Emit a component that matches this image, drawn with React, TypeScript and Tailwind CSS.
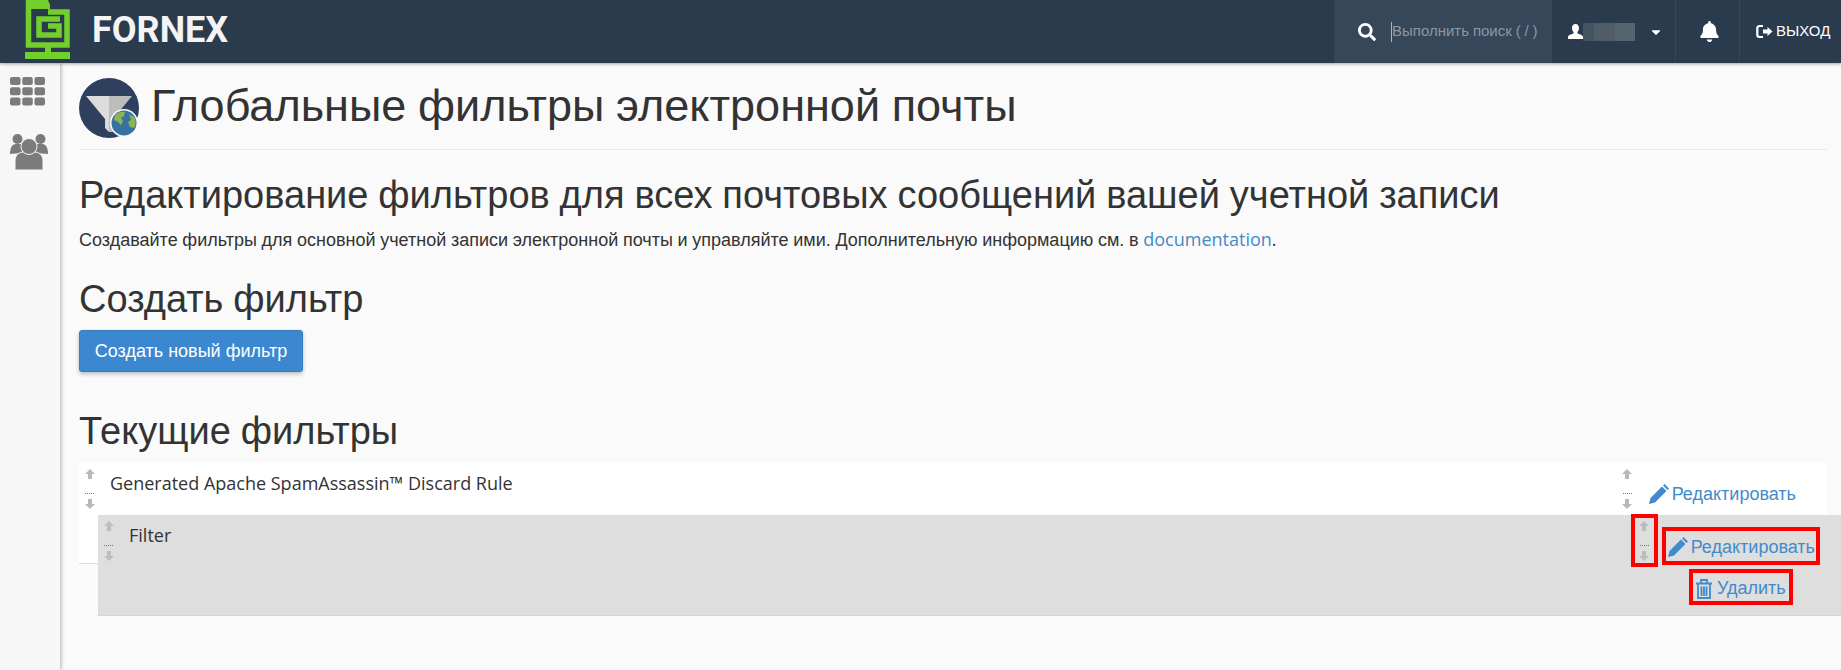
import { FaBell, FaSearch, FaCaretDown } from "react-icons/fa";

const sans = "font-['Liberation_Sans',Arial,sans-serif]";
const openSans = "font-['Open_Sans',sans-serif]";

function Logo() {
  return (
    <svg width="46" height="60" viewBox="0 0 46 60" className="shrink-0">
      <g fill="none" stroke="#72cf2c" strokeWidth="5.5">
        <path d="M3.500 0V45H42V12H23" />
        <path d="M35 19H14V35H34V26H23" />
      </g>
      <path d="M1 0h22l2 5v4H1z" fill="#72cf2c" />
      <path d="M20 46h6v6h19v7H0v-7h20z" fill="#72cf2c" />
    </svg>
  );
}

function Arrows({ className = "", fill = "#b9b9b9" }: { className?: string; fill?: string }) {
  return (
    <div className={`flex w-[21px] shrink-0 flex-col items-center ${className}`}>
      <Arrow fill={fill} />
      <div className="mt-[14px] mb-[5px] w-[9px] border-t border-dotted border-[#777]" />
      <Arrow fill={fill} down />
    </div>
  );
}

function Arrow({ down = false, fill }: { down?: boolean; fill: string }) {
  return (
    <svg width="10" height="10" viewBox="0 0 10 10" className={down ? "rotate-180" : ""}>
      <path d="M5 0l5 5H7v5H3V5H0z" fill={fill} />
    </svg>
  );
}

function PencilIcon() {
  return (
    <svg width="20" height="20" viewBox="0 0 20 20" fill="#428bca" className="shrink-0">
      <path d="M0 20l1.500-6L13 2.500 17.500 7 6 18.500z" />
      <path d="M14 1.500L15.500 0 20 4.500 18.500 6z" />
    </svg>
  );
}

function EditLink({ className = "" }: { className?: string }) {
  return (
    <a className={`flex items-center text-[18px] leading-[26px] text-[#428bca] ${sans} ${className}`}>
      <PencilIcon />
      <span className="ml-[3px]">Редактировать</span>
    </a>
  );
}

function TrashIcon() {
  return (
    <svg width="16" height="20" viewBox="0 0 16 20" fill="none" stroke="#428bca" strokeWidth="1.800" className="mr-[5px]">
      <path d="M0 4.500h16M5 4V1h6v3M2 5v14h12V5M5.500 7.500V17M8 7.500V17M10.500 7.500V17" />
    </svg>
  );
}

function GridIcon() {
  const cells = [0, 1, 2, 3, 4, 5, 6, 7, 8];
  return (
    <svg width="35" height="29" viewBox="0 0 35 29" fill="#7b7b7b">
      {cells.map((i) => (
        <rect key={i} x={(i % 3) * 12.25} y={Math.floor(i / 3) * 10.25} width="10.500" height="8" rx="2" />
      ))}
    </svg>
  );
}

function UsersIcon() {
  return (
    <svg width="38" height="36" viewBox="0 0 38 36" fill="#7b7b7b">
      <circle cx="7.500" cy="5" r="5" />
      <circle cx="30.500" cy="5" r="5" />
      <path d="M0 20c0-6 2-10 6-10h6v9z" />
      <path d="M38 20c0-6-2-10-6-10h-6v9z" />
      <path d="M5 36V27c0-6 4-9 9-9h10c5 0 9 3 9 9v9z" stroke="#f7f7f7" strokeWidth="1" />
      <circle cx="19" cy="12.500" r="8" stroke="#f7f7f7" strokeWidth="1" />
    </svg>
  );
}

function FilterIcon() {
  return (
    <svg width="60" height="60" viewBox="0 0 60 60" className="shrink-0">
      <circle cx="30" cy="30" r="30" fill="#2f3f5e" />
      <path d="M7 18h23v36l-4-4V41z" fill="#dcdcdc" />
      <path d="M30 18h23L34 41v13h-4z" fill="#bdbdbd" />
      <circle cx="45" cy="45" r="14" fill="#fafafa" />
      <circle cx="45" cy="45" r="12.500" fill="#37719f" />
      <path d="M36 37c3-3 7-4 10-3l-1 4-3 2 2 3-2 4-3-3-4-2zM50 36l6 4c1 4 1 7-1 10l-4-1-2-5 3-2z" fill="#8cb357" />
    </svg>
  );
}

export default function App() {
  return (
    <div className={`flex h-[670px] w-[1841px] flex-col overflow-hidden bg-[#fafafa] text-[#333] ${sans}`}>
      <header className="relative z-20 flex h-[63px] shrink-0 items-center bg-[#2a3b4d] shadow-[0_1px_3px_rgba(0,0,0,0.35)]">
        <div className="ml-[25px] flex items-center self-start">
          <Logo />
          <span className="ml-[21px] font-['Roboto',sans-serif] text-[36px] font-bold leading-[60px] text-[#f4f4f4]">FORNEX</span>
        </div>
        <div className="ml-auto flex h-full items-stretch">
          <div className="flex w-[218px] items-center border-x border-[#33465a] bg-[#364759] pl-[23px]">
            <FaSearch className="h-[18px] w-[18px] text-white" />
            <div className="ml-[15px] h-[20px] border-l border-[#aab4be]" />
            <span className="text-[15px] text-[#8c97a3] [word-spacing:-0.3px]">Выполнить поиск ( / )</span>
          </div>
          <div className="flex w-[124px] items-center border-r border-[#33465a] pl-[16px]">
            <svg width="15" height="15" viewBox="0 0 15 15" fill="#fff">
              <path d="M7.500 0c2.300 0 3.500 1.700 3.500 4 0 1.700-.7 3-1.500 4v1.500c2 .7 5.500 1.500 5.500 3.500v2H0v-2c0-2 3.500-2.800 5.500-3.500V8C4.700 7 4 5.700 4 4c0-2.300 1.200-4 3.500-4z" />
            </svg>
            <div className="flex h-[18px] w-[52px]">
              <div className="w-[11px] bg-[#455463]" />
              <div className="w-[21px] bg-[#505d69]" />
              <div className="w-[20px] bg-[#566470]" />
            </div>
            <FaCaretDown className="ml-[14px] h-[14px] w-[14px] text-white" />
          </div>
          <div className="flex w-[64px] items-center justify-center border-r border-[#33465a] pl-[3px]">
            <FaBell className="h-[21px] w-[21px] text-white" />
          </div>
          <div className="flex w-[101px] items-center pl-[16px] text-[15px] text-white">
            <svg width="17" height="15" viewBox="0 0 17 15" fill="none" className="mr-[3px] shrink-0">
              <path d="M7 2H3.500a2.200 2.200 0 0 0-2.200 2.200v6.600A2.200 2.200 0 0 0 3.500 13H7" stroke="#fff" strokeWidth="2.200" />
              <path d="M7 5.500h4.500V3L16.500 7.500 11.500 12V9.500H7z" fill="#fff" />
            </svg>
            ВЫХОД
          </div>
        </div>
      </header>

      <div className="flex min-h-0 flex-1">
        <aside className="z-10 flex w-[60px] shrink-0 flex-col items-start bg-[#f7f7f7] pt-[14px] pl-[10px] shadow-[1px_0_4px_rgba(0,0,0,0.3)]">
          <GridIcon />
          <div className="mt-[28px]">
            <UsersIcon />
          </div>
        </aside>

        <main className="relative min-w-0 flex-1 pl-[19px]">
          <div className="mr-[14px] flex items-center border-b border-[#eaeaea] pt-[15px] pb-[11px]">
            <FilterIcon />
            <h1 className="ml-[12px] -mt-[4px] text-[45px] font-normal leading-[46px] [word-spacing:-0.81px]">Глобальные фильтры электронной почты</h1>
          </div>

          <h2 className="mt-[24px] text-[38px] leading-[42px] [word-spacing:-0.68px]">Редактирование фильтров для всех почтовых сообщений вашей учетной записи</h2>
          <p className="mt-[11px] text-[18px] leading-[24px] [word-spacing:-0.32px]">
            Создавайте фильтры для основной учетной записи электронной почты и управляйте ими. Дополнительную информацию см. в{" "}
            <a className={`text-[#428bca] ${openSans}`}>documentation</a>
            <span className={openSans}>.</span>
          </p>

          <h2 className="mt-[26px] text-[38px] leading-[42px] [word-spacing:-0.68px]">Создать фильтр</h2>
          <button className="mt-[10px] block h-[42px] w-[224px] rounded-[3px] border border-[#357ebd] bg-[#3b88d0] text-[18px] text-white shadow-[0_2px_4px_rgba(0,0,0,0.25)]">
            Создать новый фильтр
          </button>

          <h2 className="mt-[38px] text-[38px] leading-[42px] [word-spacing:-0.68px]">Текущие фильтры</h2>

          <div className="relative mt-[11px] mr-[14px] flex h-[101px] items-start border-b border-[#dddddd] bg-white">
            <Arrows className="mt-[6px]" />
            <span className={`ml-[10px] mt-[8px] text-[18px] leading-[24px] ${openSans}`}>Generated Apache SpamAssassin™ Discard Rule</span>
            <Arrows className="ml-auto mt-[6px]" />
            <EditLink className="ml-[11px] mr-[31px] mt-[18px]" />

            <div className="absolute top-[52px] left-[19px] -right-[14px] flex h-[101px] items-start border-b border-[#d5d5d5] bg-[#dedede]">
              <Arrows className="mt-[6px]" fill="#bdbdbd" />
              <span className={`ml-[10px] mt-[8px] text-[18px] leading-[24px] ${openSans}`}>Filter</span>
              <div className="ml-auto mr-[21px] flex items-start">
                <div className="-mt-[1px] flex h-[53px] w-[27px] justify-center border-[4px] border-[#ff0000]">
                  <Arrows className="mt-[3px]" fill="#bdbdbd" />
                </div>
                <div className="ml-[4px] mt-[12px] flex flex-col items-center">
                  <div className="border-[4px] border-[#ff0000] pl-[2px] pr-[1px] pt-[3px] pb-[1px]">
                    <EditLink />
                  </div>
                  <div className="mt-[4px] border-[4px] border-[#ff0000] px-[3px] pt-[3px]">
                    <a className="flex items-center text-[18px] leading-[25px] text-[#428bca]">
                      <TrashIcon />
                      Удалить
                    </a>
                  </div>
                </div>
              </div>
            </div>
          </div>
        </main>
      </div>
    </div>
  );
}
